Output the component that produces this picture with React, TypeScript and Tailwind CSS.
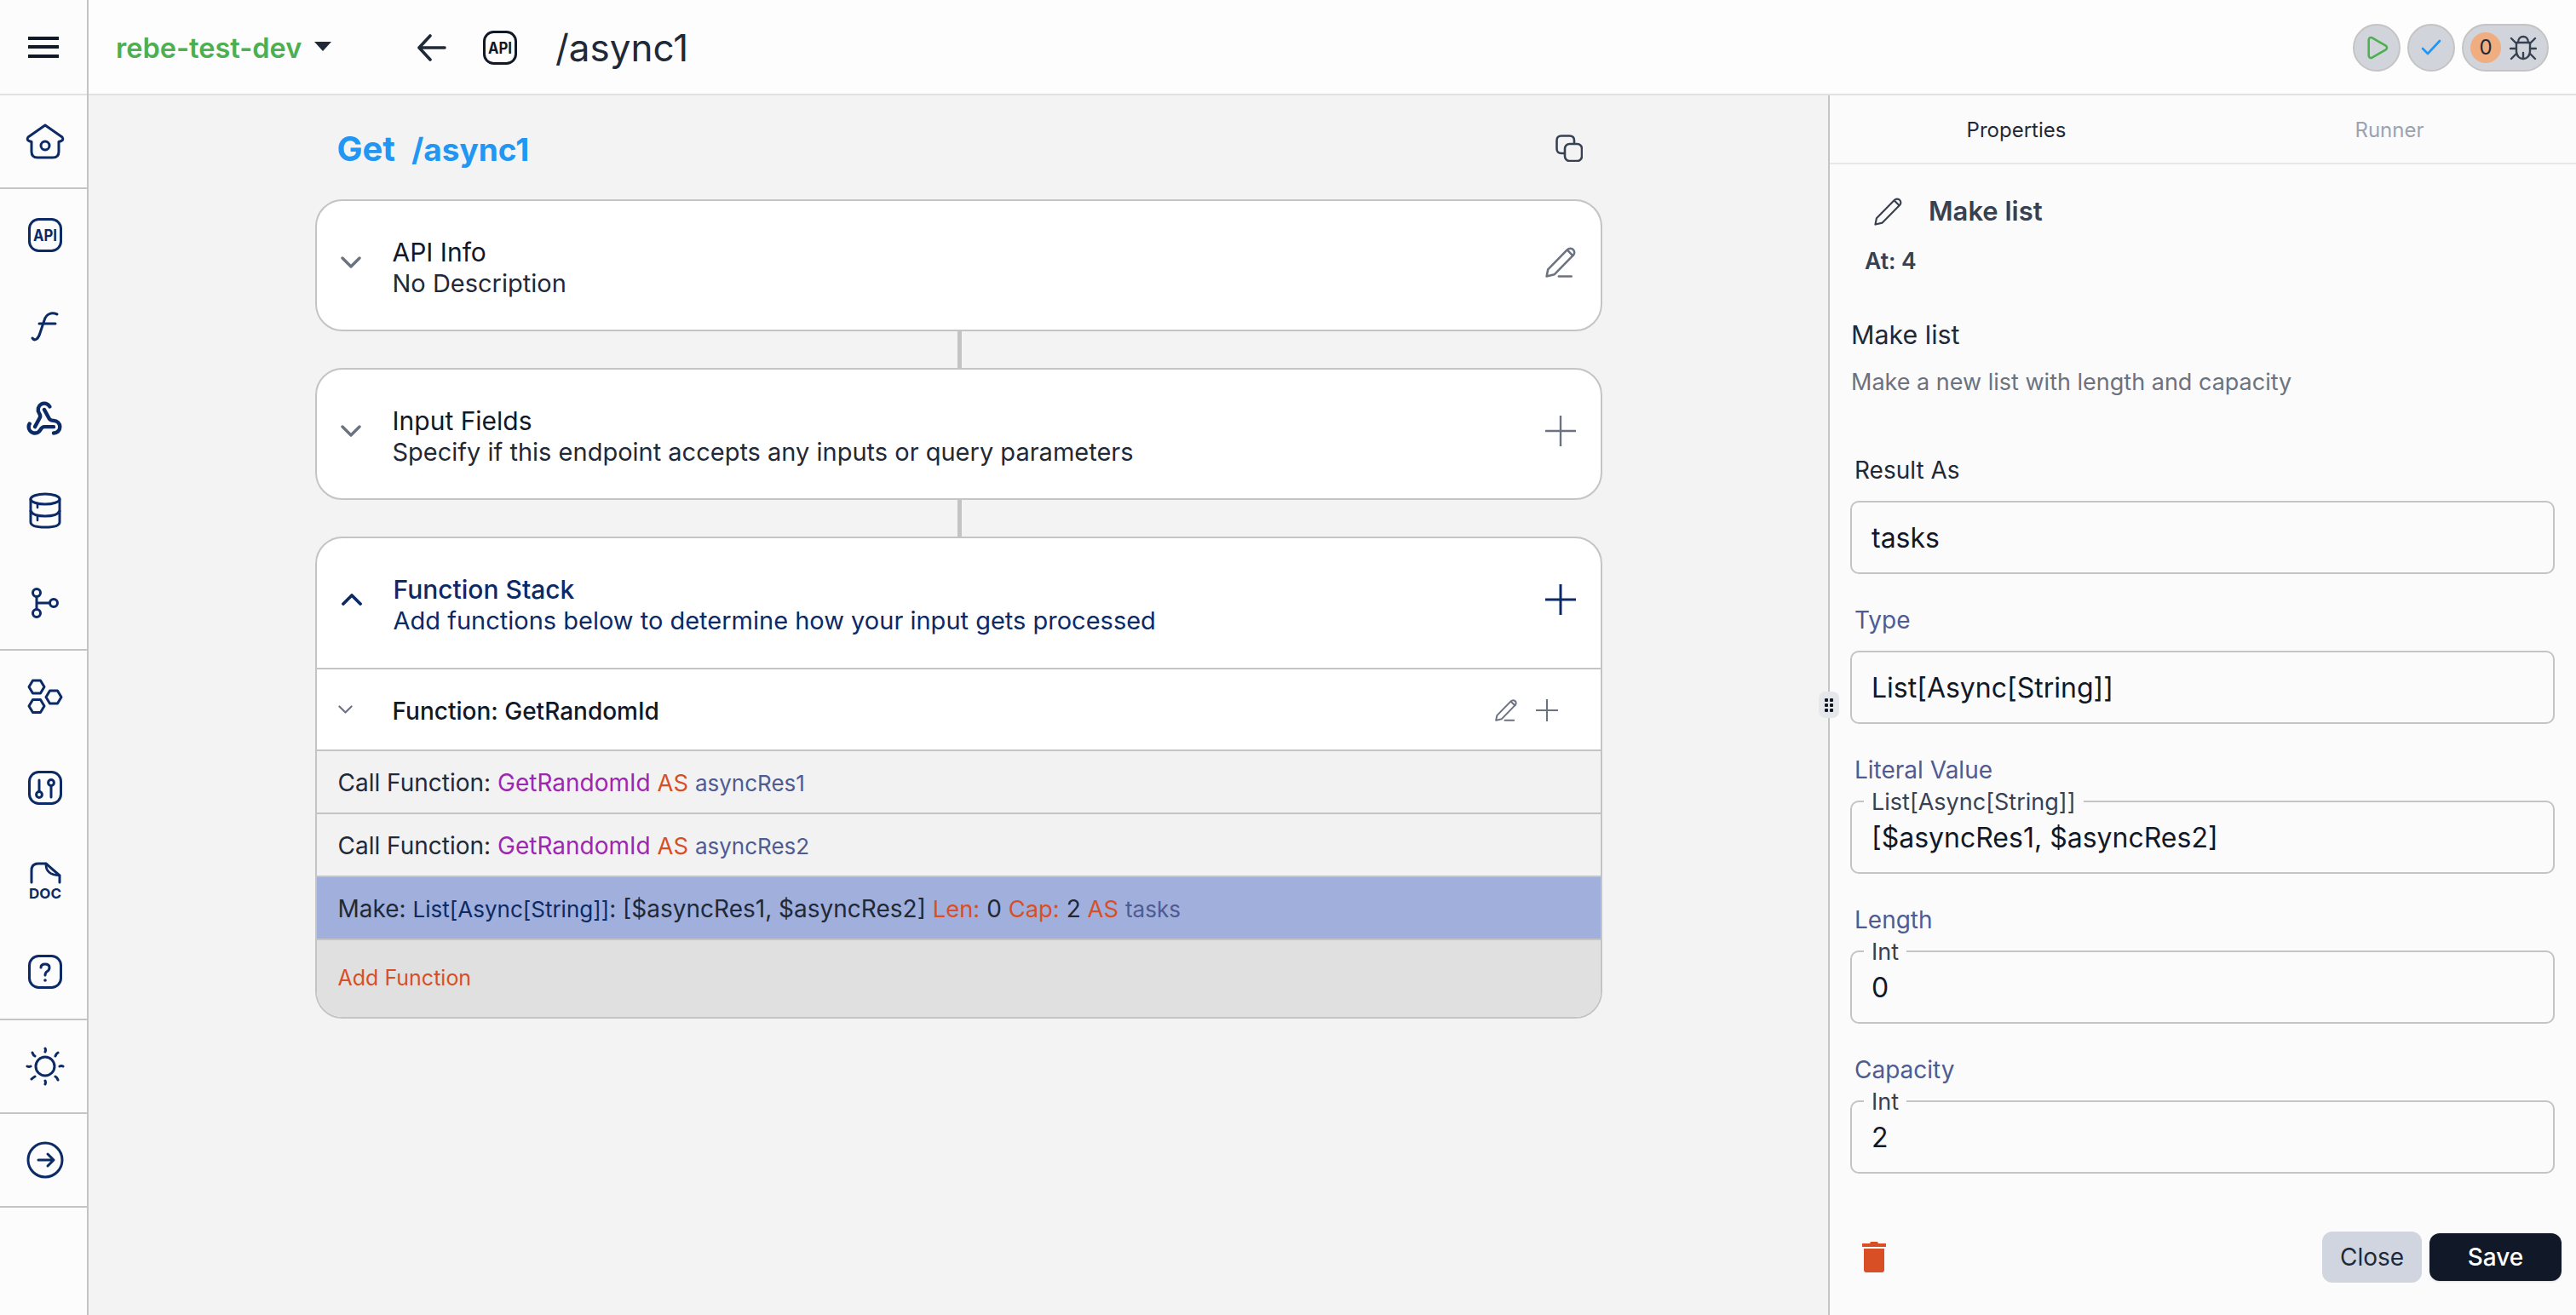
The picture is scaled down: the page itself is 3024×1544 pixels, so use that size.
import React from "react";
import { Webhook, Play } from "lucide-react";

const NAVY = "#0b2a66";

function Cell({ cy, border, children, h = "h-[108px]" }: { cy: number; border?: boolean; h?: string; children: React.ReactNode }) {
  return (
    <div className={`${h} flex items-center justify-center shrink-0 ${border ? "border-b-2 border-[#c4c4c4]" : ""}`}>
      <svg width="48" height="48" viewBox={`27 ${cy - 24} 48 48`} fill="none" stroke={NAVY} strokeWidth="3" strokeLinecap="round" strokeLinejoin="round" className="ml-[2px]">
        {children}
      </svg>
    </div>
  );
}

function Pencil({ size, color, stroke, underline = true }: { size: number; color: string; stroke: number; underline?: boolean }) {
  return (
    <svg width={size} height={size} viewBox="0 0 34 34" fill="none" stroke={color} strokeWidth={stroke} strokeLinecap="round" strokeLinejoin="round">
      <path d="M1.5 32.5 L3 25 L24 3.5 C26 1.5 28.5 1.2 30.5 2.5 C32.5 4 33 7 31 9 L10 30.5 Z" />
      <path d="M24.5 3.5 L30.5 9.5" />
      {underline && <path d="M15 32.5 H29" />}
    </svg>
  );
}

function Plus({ size, color, stroke }: { size: number; color: string; stroke: number }) {
  return (
    <svg width={size} height={size} viewBox="0 0 36 36" fill="none" stroke={color} strokeWidth={stroke}>
      <path d="M18 0 V36 M0 18 H36" />
    </svg>
  );
}

function Chevron({ w, color, stroke, up }: { w: number; color: string; stroke: number; up?: boolean }) {
  const h = Math.round(w * 0.58);
  return (
    <svg width={w} height={h} viewBox="0 0 24 14" fill="none" stroke={color} strokeWidth={stroke} strokeLinecap="round" strokeLinejoin="round">
      <path d={up ? "M2 12 L12 2 L22 12" : "M2 2 L12 12 L22 2"} />
    </svg>
  );
}

function ApiIcon({ color, size }: { color: string; size: number }) {
  return (
    <svg width={size} height={size} viewBox="0 0 40 40" fill="none">
      <rect x="1.5" y="1.5" width="37" height="37" rx="11" stroke={color} strokeWidth="3" />
      <text x="20" y="27" textAnchor="middle" fontFamily="Inter, sans-serif" fontWeight="700" fontSize="19" textLength="28" lengthAdjust="spacingAndGlyphs" fill={color}>API</text>
    </svg>
  );
}

function BugIcon() {
  return (
    <svg width="32" height="32" viewBox="0 0 32 32" fill="none" stroke="#374151" strokeWidth="2.4" strokeLinecap="round" strokeLinejoin="round">
      <path d="M10 10 C10 5 13 3 16 3 C19 3 22 5 22 10" />
      <path d="M8 10 H24 V20 C24 26 20 29 16 29 C12 29 8 26 8 20 Z" />
      <path d="M16 22 V29" />
      <path d="M2 5 L8 11 M30 5 L24 11 M1 17 H8 M31 17 H24 M2 29 L8 23 M30 29 L24 23" />
    </svg>
  );
}

function Sidebar() {
  return (
    <div className="w-[104px] shrink-0 flex flex-col border-r-2 border-[#c4c4c4] bg-[#fcfcfc] h-full">
      <div className="h-[112px] shrink-0 flex items-center justify-center border-b-2 border-[#dfe1e5] pt-[2px]">
        <svg width="38" height="26" viewBox="0 0 38 26" fill="#111827">
          <rect x="1" y="0" width="36" height="4" />
          <rect x="1" y="10" width="36" height="4" />
          <rect x="1" y="21" width="36" height="4" />
        </svg>
      </div>
      <Cell cy={166} border h="h-[110px]">
        <path d="M52 147 L32 161 Q30 164 33 165.5 L36 166.5 V178 Q36 185 43 185 H61 Q68 185 68 178 V166.5 L71 165.5 Q74 164 72 161 Z" />
        <circle cx="52" cy="171" r="5" />
      </Cell>
      <Cell cy={276}>
        <rect x="33.5" y="257.5" width="37" height="37" rx="11" />
        <text x="52" y="283" textAnchor="middle" fontFamily="Inter, sans-serif" fontWeight="700" fontSize="19" textLength="28" lengthAdjust="spacingAndGlyphs" fill={NAVY} stroke="none">API</text>
      </Cell>
      <Cell cy={384}>
        <path d="M37 397 C40 401 44 398 46 391 L51 376 C53 369 59 366 66 369" />
        <path d="M45 380 H64" />
      </Cell>
      <div className="h-[108px] flex items-center justify-center shrink-0">
        <Webhook size={44} color={NAVY} strokeWidth={2.4} className="ml-[2px]" />
      </div>
      <Cell cy={600}>
        <ellipse cx="52" cy="586" rx="17" ry="6" />
        <path d="M35 586 V613 Q35 619 52 619 Q69 619 69 613 V586" />
        <path d="M35 600 Q38 606 52 606 Q66 606 69 600" />
        <path d="M43 592 V596 M43 606 V611" strokeWidth="2.6" />
      </Cell>
      <Cell cy={708} border h="h-[110px]">
        <circle cx="42" cy="696" r="4.5" />
        <circle cx="42" cy="720" r="4.5" />
        <circle cx="62" cy="708" r="4.5" />
        <path d="M42 700.5 V715.5 M42 708 H57.5" />
      </Cell>
      <Cell cy={818}>
        <path d="M33 806.5 L37.5 799 H46.5 L51 806.5 L46.5 814 H37.5 Z" />
        <path d="M33 829 L37.5 821.5 H46.5 L51 829 L46.5 836.5 H37.5 Z" />
        <path d="M53 818.5 L57.5 811 H66.5 L71 818.5 L66.5 826 H57.5 Z" />
      </Cell>
      <Cell cy={926}>
        <rect x="33.5" y="906.5" width="37" height="37" rx="11" />
        <circle cx="45" cy="933" r="3.4" />
        <path d="M45 916 V929.5" />
        <circle cx="59" cy="919" r="3.4" />
        <path d="M59 922.5 V936" />
      </Cell>
      <Cell cy={1034}>
        <path d="M36 1036 V1022 Q36 1014 44 1014 H53 L69 1028 V1036" />
        <path d="M53 1014 Q52 1027 69 1028" strokeWidth="2.6" />
        <text x="52" y="1054.5" textAnchor="middle" fontFamily="Inter, sans-serif" fontWeight="700" fontSize="16.5" textLength="38" lengthAdjust="spacingAndGlyphs" fill={NAVY} stroke="none">DOC</text>
      </Cell>
      <Cell cy={1142} border h="h-[110px]">
        <rect x="33.5" y="1122.5" width="37" height="37" rx="11" />
        <path d="M47 1136 Q47 1132 52 1132 Q57 1132 57 1136 Q57 1139 54.5 1140.5 Q52 1142 52 1145" />
        <circle cx="52" cy="1151" r="1.8" fill={NAVY} stroke="none" />
      </Cell>
      <Cell cy={1252} border h="h-[110px]">
        <circle cx="52" cy="1252" r="11" />
        <path d="M52 1231 Q53 1233 52 1235 M52 1269 Q53 1271 52 1273 M31 1252 Q33 1253 35 1252 M69 1252 Q71 1251 73 1252 M37 1236 Q38 1239 40 1240 M64 1264 Q66 1265 67 1268 M67 1236 Q65 1237 64 1240 M40 1264 Q38 1265 36 1267" />
      </Cell>
      <Cell cy={1362} border h="h-[110px]">
        <circle cx="52" cy="1362" r="20" />
        <path d="M44 1362 H62 M55 1355 L62 1362 L55 1369" />
      </Cell>
    </div>
  );
}

function Header() {
  return (
    <div className="h-[112px] shrink-0 flex items-center border-b-2 border-[#dfe1e5] bg-[#fdfdfd] pl-[32px] pr-[32px] pt-[2px]">
      <span className="text-[32.5px] font-semibold text-[#4caf50] w-[218px] whitespace-nowrap mt-[2px]">rebe-test-dev</span>
      <svg width="20" height="11" viewBox="0 0 20 11" className="ml-[15px] mt-[-4px]"><path d="M0 0 H20 L10 11 Z" fill="#1f2937" /></svg>
      <svg width="34" height="32" viewBox="0 0 34 32" fill="none" stroke="#1f2937" strokeWidth="3.6" strokeLinecap="round" strokeLinejoin="round" className="ml-[101px]">
        <path d="M32 16 H3 M15 2 L2 16 L15 30" />
      </svg>
      <div className="ml-[43px]"><ApiIcon color="#111827" size={40} /></div>
      <span className="ml-[45px] text-[44px] text-[#1f2937] leading-none">/async1</span>
      <div className="ml-auto flex items-center gap-[8px]">
        <div className="w-[56px] h-[56px] rounded-full bg-[#d1d5db] border-2 border-[#c4c4c4] flex items-center justify-center">
          <Play size={32} color="#4caf50" strokeWidth={1.9} />
        </div>
        <div className="w-[56px] h-[56px] rounded-full bg-[#d1d5db] border-2 border-[#c4c4c4] flex items-center justify-center">
          <svg width="24" height="20" viewBox="0 0 24 20" fill="none" stroke="#2196f3" strokeWidth="2.6" strokeLinecap="round" strokeLinejoin="round"><path d="M2 11 L8 17 L22 2" /></svg>
        </div>
        <div className="w-[102px] h-[56px] rounded-full bg-[#d1d5db] border-2 border-[#c4c4c4] flex items-center pl-[8px] gap-[10px]">
          <div className="w-[36px] h-[36px] rounded-full bg-[#f0ad80] flex items-center justify-center text-[24px] text-[#1f2937]">0</div>
          <BugIcon />
        </div>
      </div>
    </div>
  );
}

function Card({ title, sub, icon, navy, chevronUp, h }: { title: string; sub: string; icon: React.ReactNode; navy?: boolean; chevronUp?: boolean; h: string }) {
  return (
    <div className={`${h} shrink-0 flex items-center pl-[28px] pr-[29px] ${navy ? "text-[#0b2a66]" : ""}`}>
      <div className={`w-[61px] -mt-[8px] flex items-center ${navy ? "ml-[1px]" : ""}`}>
        <Chevron w={24} color={navy ? NAVY : "#6b7280"} stroke={navy ? 3.8 : 3.4} up={chevronUp} />
      </div>
      <div className="flex-1 mt-[3px]">
        <div className={`text-[30px] leading-[37px] ${navy ? "text-[#0b2a66] font-medium" : "text-[#111827] mt-[2px]"}`}>{title}</div>
        <div className={`text-[29px] leading-[35px] ${navy ? "text-[#0b2a66]" : "text-[#1f2937]"}`}>{sub}</div>
      </div>
      <div className="-mt-[8px]">{icon}</div>
    </div>
  );
}

const Connector = () => <div className="w-[5px] h-[43px] bg-[#c4c4c4] self-start ml-[754px] shrink-0" />;

function Row({ bg, children }: { bg: string; children: React.ReactNode }) {
  return (
    <div className={`h-[74px] ${bg} border-b-2 border-[#c4c4c4] flex items-center pl-[25px] text-[28px] text-[#1f2937] whitespace-nowrap shrink-0`}>
      <span className="mt-[3px]">{children}</span>
    </div>
  );
}

const Fn = ({ children }: { children: React.ReactNode }) => <span className="text-[#9c27b0]">{children}</span>;
const Org = ({ children }: { children: React.ReactNode }) => <span className="text-[#d84f25] text-[27.4px]">{children}</span>;
const Ind = ({ children }: { children: React.ReactNode }) => <span className="text-[#4f5b93] text-[26px]">{children}</span>;

function Main() {
  return (
    <div className="flex-1 bg-[#f3f3f3] flex flex-col items-center overflow-hidden">
      <div className="w-[1511px] flex flex-col">
        <div className="h-[122px] pt-[4px] flex items-center justify-between pl-[26px] pr-[23px] shrink-0">
          <span className="text-[40px] font-bold text-[#2196f3] whitespace-pre">Get  <span className="text-[37px]">/async1</span></span>
          <svg width="32" height="32" viewBox="0 0 32 32" fill="none" stroke="#374151" strokeWidth="2.6" strokeLinejoin="round" className="-mt-[2px]">
            <path d="M11 22 H7 Q1.5 22 1.5 16.5 V7 Q1.5 1.5 7 1.5 H16.5 Q22 1.5 22 7 V11" />
            <rect x="11" y="11" width="20" height="20" rx="5.5" />
          </svg>
        </div>
        <div className="bg-white border-2 border-[#c4c4c4] rounded-[32px] overflow-hidden">
          <Card h="h-[151px]" title="API Info" sub="No Description" icon={<Pencil size={36} color="#6b7280" stroke={2.4} />} />
        </div>
        <Connector />
        <div className="bg-white border-2 border-[#c4c4c4] rounded-[32px] overflow-hidden">
          <Card h="h-[151px]" title="Input Fields" sub="Specify if this endpoint accepts any inputs or query parameters" icon={<Plus size={36} color="#6b7280" stroke={2.4} />} />
        </div>
        <Connector />
        <div className="bg-white border-2 border-[#c4c4c4] rounded-[32px] overflow-hidden flex flex-col">
          <div className="border-b-2 border-[#c4c4c4]">
            <Card h="h-[152px]" title="Function Stack" sub="Add functions below to determine how your input gets processed" navy chevronUp icon={<Plus size={36} color={NAVY} stroke={3} />} />
          </div>
          <div className="h-[96px] shrink-0 border-b-2 border-[#c4c4c4] flex items-center pl-[25px] pr-[50px] bg-white">
            <div className="w-[64px]"><Chevron w={17} color="#6b7280" stroke={3} /></div>
            <span className="flex-1 text-[28px] font-medium text-[#111827] mt-[4px]">Function: GetRandomId</span>
            <div className="flex items-center gap-[22px] mt-[2px]">
              <Pencil size={26} color="#6b7280" stroke={2.6} />
              <Plus size={26} color="#6b7280" stroke={2.8} />
            </div>
          </div>
          <Row bg="bg-[#f2f2f2]">Call Function: <Fn>GetRandomId</Fn> <Org>AS</Org> <Ind>asyncRes1</Ind></Row>
          <Row bg="bg-[#f2f2f2]">Call Function: <Fn>GetRandomId</Fn> <Org>AS</Org> <Ind>asyncRes2</Ind></Row>
          <Row bg="bg-[#a1afdc]">Make: <span className="text-[#0b2a66] text-[26px]">List[Async[String]]</span>: [$asyncRes1, $asyncRes2] <Org>Len:</Org> 0 <Org>Cap:</Org> 2 <Org>AS</Org> <Ind>tasks</Ind></Row>
          <div className="h-[90px] bg-[#e0e0e0] flex items-center pl-[25px] text-[25px] text-[#d84f25] shrink-0">Add Function</div>
        </div>
      </div>
    </div>
  );
}

function Field({ label, value, legend, navy }: { label: string; value: string; legend?: string; navy?: boolean }) {
  return (
    <div className="mb-[36px]">
      <div className={`h-[36px] leading-[36px] pl-[4px] mb-[18px] text-[28px] ${navy ? "text-[#4f5b93]" : "text-[#1f2937]"}`}>{label}</div>
      <div className="relative -ml-[1px] h-[86px] border-2 border-[#c4c4c4] rounded-[10px] flex items-center pl-[23px] text-[32px] text-[#111827]">
        {legend && <span className="absolute -top-[14px] left-[14px] px-[9px] bg-[#fbfbfb] text-[27px] leading-[28px] text-[#374151]">{legend}</span>}
        <span className="mt-[2px]">{value}</span>
      </div>
    </div>
  );
}

function Panel() {
  return (
    <div className="relative w-[878px] shrink-0 bg-[#fbfbfb] border-l-2 border-[#c4c4c4] flex flex-col">
      <div className="absolute left-[-13px] top-[700px] w-[24px] h-[31px] rounded-[8px] bg-[#e5e7eb] grid grid-cols-2 gap-x-[1px] gap-y-[2px] place-items-center px-[6px] py-[8px]">
        {[0, 1, 2, 3, 4, 5].map((i) => (<span key={i} className="w-[4px] h-[4px] rounded-[1px] bg-[#111827]" />))}
      </div>
      <div className="h-[81px] shrink-0 flex border-b-2 border-[#e5e7eb] text-[24px] pt-[2px]">
        <div className="flex-1 flex items-center justify-center text-[#1f2937]">Properties</div>
        <div className="flex-1 flex items-center justify-center text-[#9ca3af]">Runner</div>
      </div>
      <div className="flex-1 flex flex-col px-[25px]">
        <div className="mt-[35px] h-[40px] flex items-center pl-[27px]">
          <Pencil size={33} color="#374151" stroke={2.2} underline={false} />
          <span className="ml-[31px] text-[31px] font-semibold text-[#374151]">Make list</span>
        </div>
        <div className="mt-[20px] h-[36px] leading-[36px] pl-[16px] text-[26.5px] font-semibold text-[#374151]">At: 4</div>
        <div className="mt-[49px] h-[40px] leading-[40px] text-[30.4px] text-[#1f2937]">Make list</div>
        <div className="mt-[18px] h-[36px] leading-[36px] text-[27px] text-[#6b7280]">Make a new list with length and capacity</div>
        <div className="mt-[67px]">
          <Field label="Result As" value="tasks" />
          <Field label="Type" value="List[Async[String]]" navy />
          <Field label="Literal Value" value="[$asyncRes1, $asyncRes2]" legend="List[Async[String]]" navy />
          <Field label="Length" value="0" legend="Int" navy />
          <Field label="Capacity" value="2" legend="Int" navy />
        </div>
      </div>
      <div className="absolute bottom-[38px] left-0 right-[17px] pl-[38px] flex items-center justify-between">
        <svg width="28" height="36" viewBox="0 0 28 36" fill="#d84f25">
          <path d="M10 0 H18 L19 2 H28 V6 H0 V2 H9 Z" />
          <path d="M2 8 H26 V33 Q26 36 23 36 H5 Q2 36 2 33 Z" />
        </svg>
        <div className="flex items-center gap-[9px]">
          <div className="w-[117px] h-[60px] rounded-[12px] bg-[#d1d5e0] flex items-center justify-center text-[28px] text-[#1f2937]">Close</div>
          <div className="w-[155px] h-[56px] rounded-[12px] bg-[#111827] flex items-center justify-center text-[28px] font-medium text-white shadow-sm">Save</div>
        </div>
      </div>
    </div>
  );
}

export default function App() {
  return (
    <div className="w-screen h-screen overflow-hidden flex font-['Inter',sans-serif] bg-[#fbfbfb]">
      <Sidebar />
      <div className="flex-1 min-w-0 flex flex-col">
        <Header />
        <div className="flex-1 min-h-0 flex">
          <Main />
          <Panel />
        </div>
      </div>
    </div>
  );
}
